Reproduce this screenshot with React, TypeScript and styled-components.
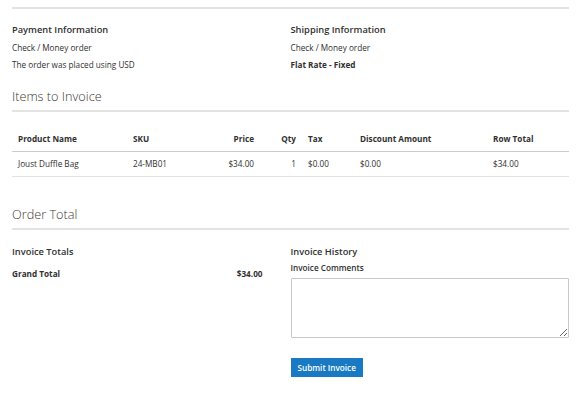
import styled, { createGlobalStyle } from "styled-components";

const GlobalStyle = createGlobalStyle`
  html, body {
    margin: 0;
    padding: 0;
    background: #fff;
  }
  body {
    font-family: "Open Sans", "Liberation Sans", sans-serif;
    color: #303030;
    font-size: 8.2px;
  }
`;

const Page = styled.div`
  width: 557px;
  margin-left: 12px;
  padding-top: 7px;
`;

const TopRule = styled.div`
  border-top: 2px solid #e3e3e3;
`;

const TwoCols = styled.div`
  display: grid;
  grid-template-columns: 1fr 1fr;
`;

const InfoBlock = styled.div`
  padding-top: 14px;
`;

const BlockTitle = styled.div`
  font-size: 9.3px;
  font-weight: 600;
  color: #303030;
  line-height: 14px;
  margin-bottom: 2px;
`;

const InfoLine = styled.div<{ $bold?: boolean }>`
  line-height: 17px;
  font-weight: ${(p) => (p.$bold ? 700 : 400)};
`;

const SectionTitle = styled.div<{ $top: number }>`
  margin-top: ${(p) => p.$top}px;
  font-size: 12.7px;
  font-weight: 300;
  line-height: 18px;
  color: #41362f;
  padding-bottom: 5px;
  border-bottom: 2px solid #e3e3e3;
`;

const Table = styled.table`
  width: 100%;
  border-collapse: collapse;
  table-layout: fixed;
  margin-top: 15px;
`;

const Th = styled.th<{ $right?: boolean }>`
  font-size: 8.2px;
  font-weight: 700;
  text-align: ${(p) => (p.$right ? "right" : "left")};
  padding: 5px 6px 6px;
  line-height: 13px;
  white-space: nowrap;
  border-bottom: 1px solid #ccc;
`;

const Td = styled.td<{ $right?: boolean }>`
  text-align: ${(p) => (p.$right ? "right" : "left")};
  padding: 5px 6px 6px;
  line-height: 13px;
  white-space: nowrap;
  border-bottom: 1px solid #e3e3e3;
`;

const TotalsBlock = styled.div`
  padding-top: 15px;
  padding-right: 28px;
`;

const TotalRow = styled.div`
  display: flex;
  justify-content: space-between;
  font-weight: 700;
  line-height: 14px;
  margin-top: 8px;
`;

const HistoryBlock = styled.div`
  padding-top: 15px;
`;

const FieldLabel = styled.label`
  display: block;
  font-weight: 600;
  line-height: 13px;
  margin-top: 1px;
`;

const Comments = styled.textarea`
  display: block;
  box-sizing: border-box;
  width: 100%;
  height: 60px;
  margin-top: 4px;
  border: 1px solid #c8c8c8;
  border-radius: 1px;
  font-family: inherit;
  resize: vertical;
`;

const SubmitButton = styled.button`
  margin-top: 20px;
  height: 19px;
  padding: 0 6px;
  background: #1979c3;
  border: 1px solid #1979c3;
  color: #fff;
  font-family: "Open Sans", "Liberation Sans", sans-serif;
  font-size: 8.2px;
  font-weight: 600;
  border-radius: 0;
`;

const columns = [115, 85, 48, 42, 52, 133, 82];

export default function App() {
  return (
    <>
      <GlobalStyle />
      <Page>
        <TopRule />
        <TwoCols>
          <InfoBlock>
            <BlockTitle>Payment Information</BlockTitle>
            <InfoLine>Check / Money order</InfoLine>
            <InfoLine>The order was placed using USD</InfoLine>
          </InfoBlock>
          <InfoBlock>
            <BlockTitle>Shipping Information</BlockTitle>
            <InfoLine>Check / Money order</InfoLine>
            <InfoLine $bold>Flat Rate - Fixed</InfoLine>
          </InfoBlock>
        </TwoCols>

        <SectionTitle $top={14}>Items to Invoice</SectionTitle>
        <Table>
          <colgroup>
            {columns.map((w, i) => (
              <col key={i} style={{ width: `${w}px` }} />
            ))}
          </colgroup>
          <thead>
            <tr>
              <Th>Product Name</Th>
              <Th>SKU</Th>
              <Th $right>Price</Th>
              <Th $right>Qty</Th>
              <Th>Tax</Th>
              <Th>Discount Amount</Th>
              <Th>Row Total</Th>
            </tr>
          </thead>
          <tbody>
            <tr>
              <Td>Joust Duffle Bag</Td>
              <Td>24-MB01</Td>
              <Td $right>$34.00</Td>
              <Td $right>1</Td>
              <Td>$0.00</Td>
              <Td>$0.00</Td>
              <Td>$34.00</Td>
            </tr>
          </tbody>
        </Table>

        <SectionTitle $top={28}>Order Total</SectionTitle>
        <TwoCols>
          <TotalsBlock>
            <BlockTitle>Invoice Totals</BlockTitle>
            <TotalRow>
              <span>Grand Total</span>
              <span>$34.00</span>
            </TotalRow>
          </TotalsBlock>
          <HistoryBlock>
            <BlockTitle>Invoice History</BlockTitle>
            <FieldLabel htmlFor="comments">Invoice Comments</FieldLabel>
            <Comments id="comments" />
            <SubmitButton>Submit Invoice</SubmitButton>
          </HistoryBlock>
        </TwoCols>
      </Page>
    </>
  );
}
